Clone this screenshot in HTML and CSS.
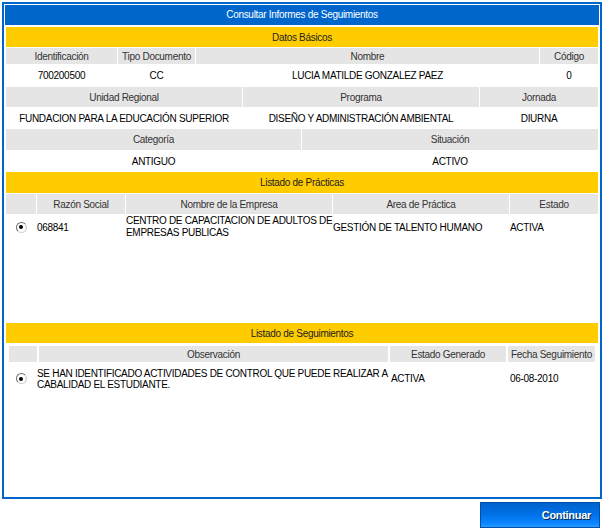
FILE: index.html
```html
<!DOCTYPE html>
<html lang="es">
<head>
<meta charset="utf-8">
<title>Consultar Informes de Seguimientos</title>
<link rel="stylesheet" href="styles.css">
</head>
<body>
<div class="frame">
  <div class="title">Consultar Informes de Seguimientos</div>

  <div class="section">
    <div class="band">Datos Básicos</div>
    <div class="row head h16">
      <div class="cell w111">Identificación</div>
      <div class="cell w77">Tipo Documento</div>
      <div class="cell w343">Nombre</div>
      <div class="cell w58">Código</div>
    </div>
    <div class="row data h21">
      <div class="cell w111">700200500</div>
      <div class="cell w77">CC</div>
      <div class="cell w343">LUCIA MATILDE GONZALEZ PAEZ</div>
      <div class="cell w58">0</div>
    </div>
    <div class="row head h20">
      <div class="cell w236">Unidad Regional</div>
      <div class="cell w236">Programa</div>
      <div class="cell w118">Jornada</div>
    </div>
    <div class="row data h20">
      <div class="cell w236">FUNDACION PARA LA EDUCACIÓN SUPERIOR</div>
      <div class="cell w236">DISEÑO Y ADMINISTRACIÓN AMBIENTAL</div>
      <div class="cell w118">DIURNA</div>
    </div>
    <div class="row head h21">
      <div class="cell w295">Categoría</div>
      <div class="cell w296">Situación</div>
    </div>
    <div class="row data h20">
      <div class="cell w295">ANTIGUO</div>
      <div class="cell w296">ACTIVO</div>
    </div>

    <div class="band h21">Listado de Prácticas</div>
    <div class="row head h20">
      <div class="cell w30"></div>
      <div class="cell w88">Razón Social</div>
      <div class="cell w206">Nombre de la Empresa</div>
      <div class="cell w176">Area de Práctica</div>
      <div class="cell w88">Estado</div>
    </div>
    <div class="list">
      <div class="row item practica">
        <div class="cell w30 center"><input class="radio" type="radio" name="practica" checked></div>
        <div class="cell w88">068841</div>
        <div class="cell w206 top">CENTRO DE CAPACITACION DE ADULTOS DE<br>EMPRESAS PUBLICAS</div>
        <div class="cell w176">GESTIÓN DE TALENTO HUMANO</div>
        <div class="cell w88">ACTIVA</div>
      </div>
    </div>

    <div class="band">Listado de Seguimientos</div>
    <div class="seg-head">
      <div class="row head h16 wide-gap">
        <div class="cell w28"></div>
        <div class="cell w349">Observación</div>
        <div class="cell w116">Estado Generado</div>
        <div class="cell w87">Fecha Seguimiento</div>
      </div>
    </div>
    <div class="row item seguimiento">
      <div class="cell w30 center"><input class="radio" type="radio" name="seguimiento" checked></div>
      <div class="cell w353 top">SE HAN IDENTIFICADO ACTIVIDADES DE CONTROL QUE PUEDE REALIZAR A<br>CABALIDAD EL ESTUDIANTE.</div>
      <div class="cell w118">ACTIVA</div>
      <div class="cell w88">06-08-2010</div>
    </div>
  </div>
</div>
<div class="actions">
  <button class="btn" type="button">Continuar</button>
</div>
</body>
</html>
```

FILE: styles.css
```css
* { box-sizing: border-box; }

html, body {
  margin: 0;
  background: #ffffff;
}

body {
  padding: 2px 0 0 2px;
  font-family: "Liberation Sans", Arial, sans-serif;
  font-size: 10px;
  letter-spacing: -0.3px;
  color: #000;
}

.frame {
  width: 600px;
  height: 497px;
  border: 2px solid #0066cc;
  padding: 1px;
  overflow: hidden;
}

.title {
  height: 20px;
  line-height: 20px;
  background: #0066cc;
  color: #ffffff;
  text-align: center;
  margin-bottom: 2px;
}

.section {
  display: flex;
  flex-direction: column;
  gap: 1px;
  padding: 0 1px;
}

.band {
  height: 20px;
  background: #ffcc00;
  color: #222;
  display: flex;
  align-items: center;
  justify-content: center;
}

.row {
  display: flex;
  gap: 1px;
}

.wide-gap { gap: 2px; }

.cell {
  display: flex;
  align-items: center;
  justify-content: center;
  text-align: center;
  flex: none;
  white-space: nowrap;
}

.head .cell {
  background: #e5e5e5;
  color: #333;
}

.data .cell {
  background: #ffffff;
  color: #000;
}

.h16 { height: 16px; }
.h20 { height: 20px; }
.h21 { height: 21px; }

.w28 { width: 28px; }
.w30 { width: 30px; }
.w58 { width: 58px; }
.w77 { width: 77px; }
.w87 { width: 87px; }
.w88 { width: 88px; }
.w111 { width: 111px; }
.w116 { width: 116px; }
.w118 { width: 118px; }
.w176 { width: 176px; }
.w206 { width: 206px; }
.w236 { width: 236px; }
.w295 { width: 295px; }
.w296 { width: 296px; }
.w343 { width: 343px; }
.w349 { width: 349px; }
.w353 { width: 353px; }

.list {
  height: 107px;
}

.item .cell {
  justify-content: flex-start;
  text-align: left;
  color: #000;
}

.item .cell.center { justify-content: center; }

.practica {
  height: 24px;
}
.practica .cell.top {
  line-height: 12px;
  align-items: flex-start;
}

.seg-head {
  padding: 2px 3px 0 3px;
}

.seguimiento {
  height: 31px;
}
.seguimiento .cell.top { line-height: 11px; }

.radio {
  appearance: none;
  -webkit-appearance: none;
  margin: 0;
  width: 11px;
  height: 11px;
  border-radius: 50%;
  border: 1px solid #6f6f6f;
  border-right-color: #c8c8c8;
  border-bottom-color: #d4d4d4;
  background: #ffffff;
  position: relative;
}

.radio:checked::after {
  content: "";
  position: absolute;
  left: 2.5px;
  top: 2.5px;
  width: 4px;
  height: 4px;
  border-radius: 50%;
  background: #000;
}

.actions {
  width: 600px;
  display: flex;
  justify-content: flex-end;
  padding: 3px 2px 0 0;
}

.btn {
  width: 120px;
  height: 26px;
  margin: 0;
  border: 1px solid #0052a8;
  background: linear-gradient(#0062cc, #0070e6 45%, #0a86ff 85%, #2a98ff);
  color: #ffffff;
  font-family: "Liberation Sans", Arial, sans-serif;
  font-weight: bold;
  font-size: 11px;
  letter-spacing: -0.3px;
  text-align: right;
  padding: 0 8px 0 0;
  text-shadow: 1px 1px 0 #00264d;
}
```
